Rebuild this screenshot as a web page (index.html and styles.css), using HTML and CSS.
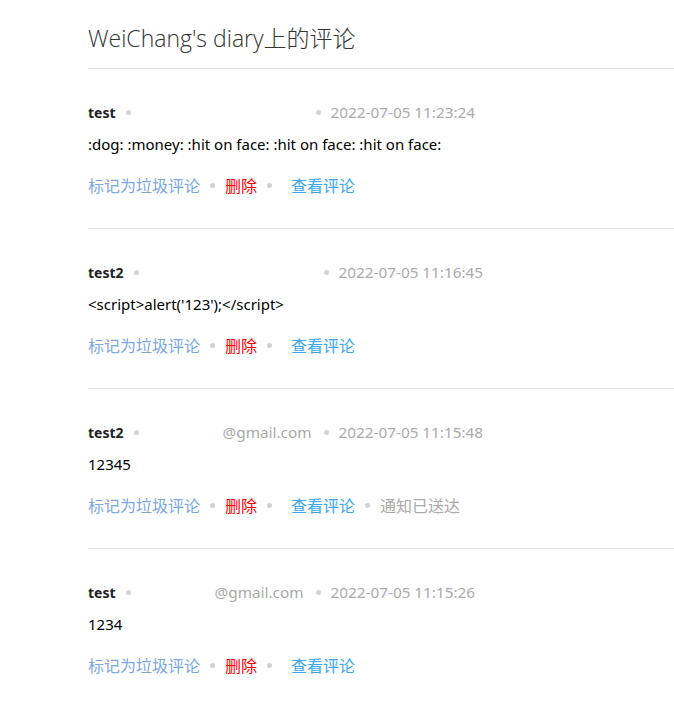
FILE: index.html
```html
<!DOCTYPE html>
<html lang="zh-CN">
<head>
<meta charset="utf-8">
<title>WeiChang's diary上的评论</title>
<link rel="stylesheet" href="styles.css">
</head>
<body>
<div class="page">
  <h1 class="title">WeiChang's diary上的评论</h1>

  <div class="comment">
    <div class="meta">
      <span class="name">test</span><span class="sep"></span><span class="email"><span class="mask"></span></span><span class="sep"></span><span class="date">2022-07-05 11:23:24</span>
    </div>
    <div class="content">:dog: :money: :hit on face: :hit on face: :hit on face:</div>
    <div class="actions">
      <a class="spam">标记为垃圾评论</a><span class="sep"></span><a class="del">删除</a><span class="sep wide"></span><a class="view">查看评论</a>
    </div>
  </div>

  <div class="comment">
    <div class="meta">
      <span class="name">test2</span><span class="sep"></span><span class="email"><span class="mask"></span></span><span class="sep"></span><span class="date">2022-07-05 11:16:45</span>
    </div>
    <div class="content">&lt;script&gt;alert('123');&lt;/script&gt;</div>
    <div class="actions">
      <a class="spam">标记为垃圾评论</a><span class="sep"></span><a class="del">删除</a><span class="sep wide"></span><a class="view">查看评论</a>
    </div>
  </div>

  <div class="comment">
    <div class="meta">
      <span class="name">test2</span><span class="sep"></span><span class="email"><span class="mask"></span>@gmail.com</span><span class="sep"></span><span class="date">2022-07-05 11:15:48</span>
    </div>
    <div class="content">12345</div>
    <div class="actions">
      <a class="spam">标记为垃圾评论</a><span class="sep"></span><a class="del">删除</a><span class="sep wide"></span><a class="view">查看评论</a><span class="sep"></span><span class="sent">通知已送达</span>
    </div>
  </div>

  <div class="comment">
    <div class="meta">
      <span class="name">test</span><span class="sep"></span><span class="email"><span class="mask"></span>@gmail.com</span><span class="sep"></span><span class="date">2022-07-05 11:15:26</span>
    </div>
    <div class="content">1234</div>
    <div class="actions">
      <a class="spam">标记为垃圾评论</a><span class="sep"></span><a class="del">删除</a><span class="sep wide"></span><a class="view">查看评论</a>
    </div>
  </div>
</div>
</body>
</html>
```

FILE: styles.css
```css
html, body {
  margin: 0;
  padding: 0;
  background: #fff;
}
body {
  font-family: "Noto Sans", "Noto Sans CJK SC", sans-serif;
  color: #222;
}
.page {
  margin-left: 88px;
}
.title {
  margin: 0;
  padding-top: 22px;
  height: 46px;
  font-size: 23px;
  line-height: 32px;
  font-weight: 300;
  color: #333;
  border-bottom: 1px solid #ddd;
  font-family: "Open Sans", "Noto Sans CJK SC", sans-serif;
}
.comment {
  padding-top: 33px;
  padding-bottom: 31px;
  border-bottom: 1px solid #e6e6e6;
}
.comment:last-child {
  border-bottom: none;
}
.meta {
  display: flex;
  align-items: center;
  height: 20px;
  font-size: 15.3px;
  white-space: nowrap;
}
.name {
  font-weight: bold;
  font-size: 14px;
  color: #222;
}
.sep {
  display: inline-block;
  width: 5px;
  height: 5px;
  border-radius: 50%;
  background: #d2d2d2;
  margin: 0 10px;
  flex: none;
}
.sep.wide {
  margin-right: 19px;
}
.email {
  display: inline-flex;
  width: 165px;
  color: #aaa;
}
.mask {
  display: inline-block;
  width: 74px;
  flex: none;
}
.date {
  color: #aaa;
}
.content {
  margin-top: 10px;
  font-size: 15px;
  line-height: 24px;
  color: #000;
}
.actions {
  margin-top: 17px;
  display: flex;
  align-items: center;
  height: 24px;
  font-size: 16px;
  white-space: nowrap;
}
.spam {
  color: #7aa7e6;
}
.del {
  color: #f00;
}
.view {
  color: #3aa6f2;
}
.sent {
  color: #aaa;
}
```
